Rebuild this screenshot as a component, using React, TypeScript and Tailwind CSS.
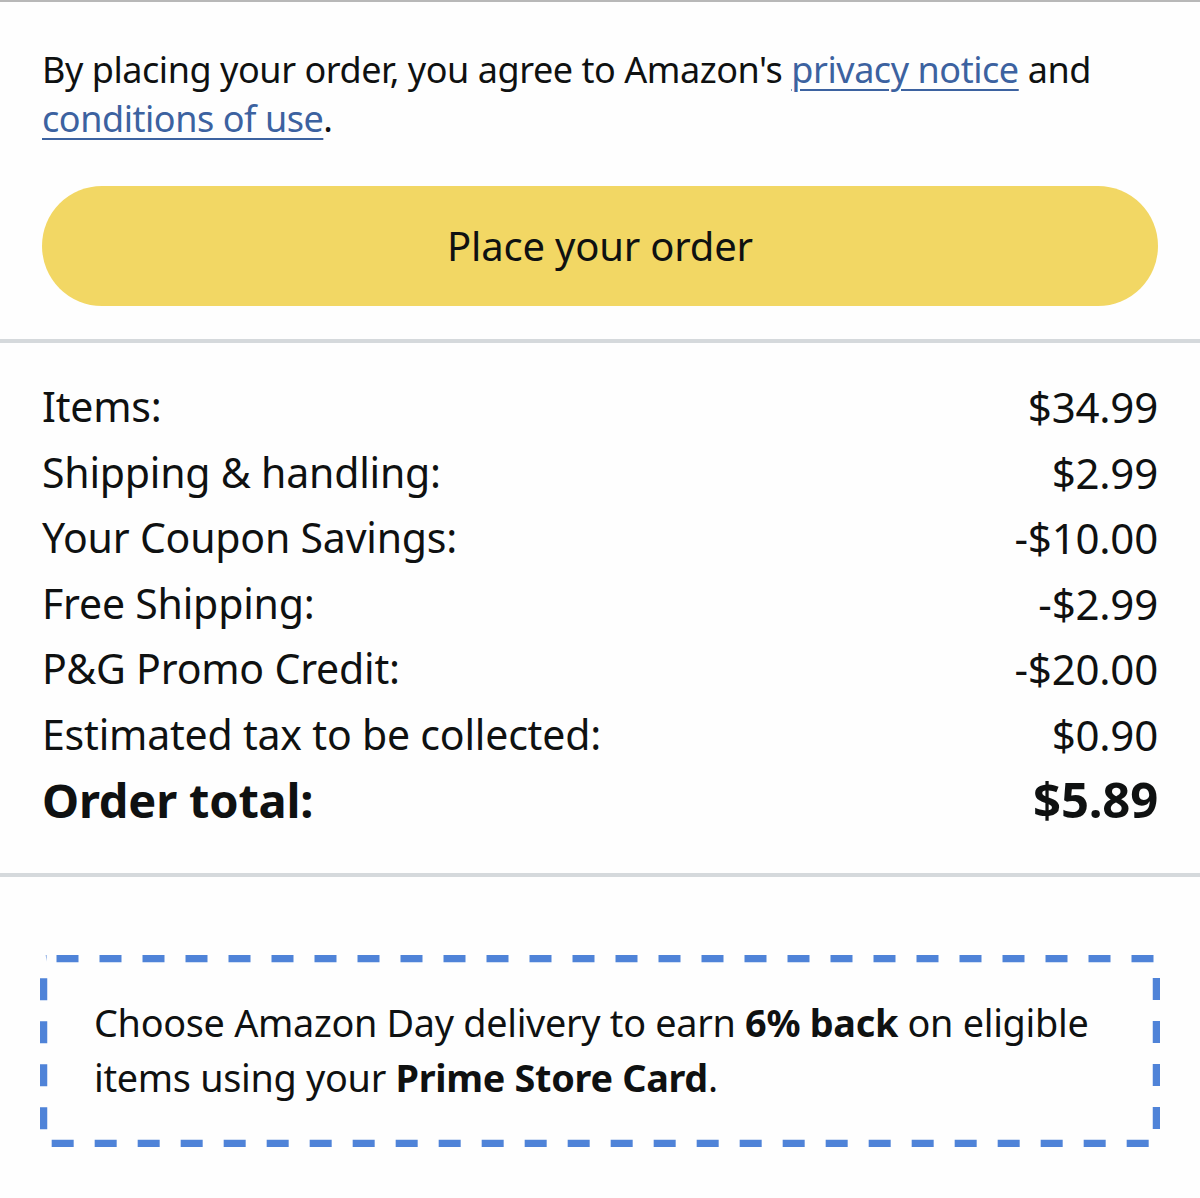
import React from 'react';

const rows = [
  { label: 'Items:', value: '$34.99' },
  { label: 'Shipping & handling:', value: '$2.99' },
  { label: 'Your Coupon Savings:', value: '-$10.00' },
  { label: 'Free Shipping:', value: '-$2.99' },
  { label: 'P&G Promo Credit:', value: '-$20.00' },
  { label: 'Estimated tax to be collected:', value: '$0.90' },
];

const App: React.FC = () => {
  return (
    <div className="min-h-[1198px] w-[1200px] bg-[#fefefe] text-[#0f1111] font-['Noto_Sans',sans-serif] border-t-2 border-[#b8b8b8]">
      {/* Terms + button */}
      <section className="px-[42px] pt-[43px] pb-[33px]">
        <p className="text-[36px] leading-[49px] tracking-[-0.45px]">
          By placing your order, you agree to Amazon's{' '}
          <a className="text-[#3c62a0] underline underline-offset-[6px] decoration-2">privacy notice</a> and{' '}
          <a className="text-[#3c62a0] underline underline-offset-[6px] decoration-2">conditions of use</a>.
        </p>
        <button className="mt-[43px] w-full h-[120px] rounded-full bg-[#f2d764] text-[40px] tracking-[-0.2px] text-[#0f1111] flex items-center justify-center">
          Place your order
        </button>
      </section>

      <div className="h-[4px] bg-[#d5d9dc]" />

      {/* Summary */}
      <section className="px-[42px] pt-[31px] pb-[40px] text-[41px] tracking-[-0.2px]">
        {rows.map((r) => (
          <div key={r.label} className="flex items-center justify-between h-[65.5px]">
            <span>{r.label}</span>
            <span className="text-[42px]">{r.value}</span>
          </div>
        ))}
        <div className="flex items-center justify-between h-[65.5px] text-[47px] font-bold">
          <span>Order total:</span>
          <span className="text-[49px]">$5.89</span>
        </div>
      </section>

      <div className="h-[4px] bg-[#d5d9dc]" />

      {/* Amazon Day promo */}
      <section className="px-[40px] pt-[78px] pb-[56px]">
        <div className="relative pl-[54px] pr-[36px] pt-[40px] pb-[42px]">
          <svg className="absolute inset-0 w-full h-full" preserveAspectRatio="none">
            <rect
              x="3.5"
              y="3.5"
              width="calc(100% - 7px)"
              height="calc(100% - 7px)"
              rx="3"
              fill="none"
              stroke="#4f83d8"
              strokeWidth="7.5"
              strokeDasharray="22 21"
              strokeDashoffset="-10"
            />
          </svg>
          <p className="relative text-[37.8px] leading-[55px] tracking-[-0.3px]">
            Choose Amazon Day delivery to earn <b className="font-bold">6% back</b> on eligible items using your{' '}
            <b className="font-bold">Prime Store Card</b>.
          </p>
        </div>
      </section>
    </div>
  );
};

export default App;
